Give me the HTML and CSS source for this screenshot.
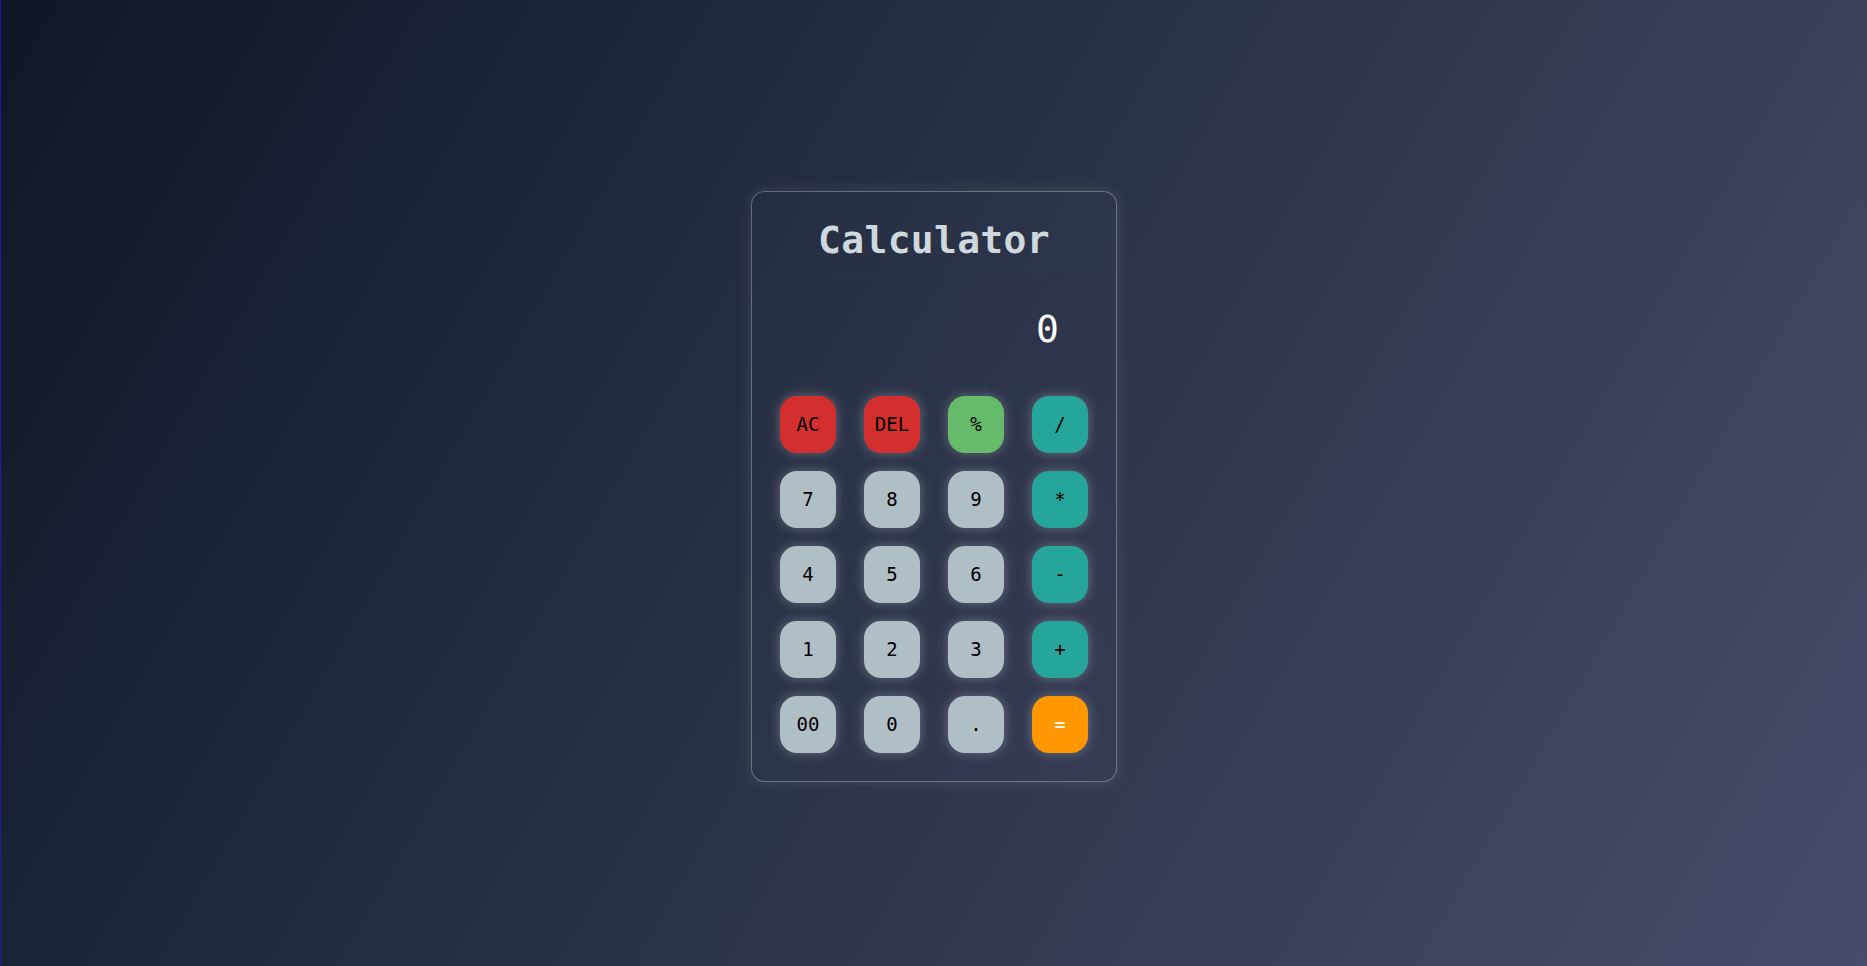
FILE: index.html
```html
<!DOCTYPE html>
<html>
<head>
<meta charset="utf-8">
<title>Calculator</title>
<link rel="stylesheet" href="styles.css">
</head>
<body>
<main class="page">
  <div class="calc">
    <h1 class="title">Calculator</h1>
    <div class="display"><span class="value">0</span></div>
    <div class="keys">
      <button class="key red">AC</button>
      <button class="key red">DEL</button>
      <button class="key green">%</button>
      <button class="key teal">/</button>
      <button class="key">7</button>
      <button class="key">8</button>
      <button class="key">9</button>
      <button class="key teal">*</button>
      <button class="key">4</button>
      <button class="key">5</button>
      <button class="key">6</button>
      <button class="key teal">-</button>
      <button class="key">1</button>
      <button class="key">2</button>
      <button class="key">3</button>
      <button class="key teal">+</button>
      <button class="key">00</button>
      <button class="key">0</button>
      <button class="key">.</button>
      <button class="key orange">=</button>
    </div>
  </div>
</main>
</body>
</html>
```

FILE: styles.css
```css
html, body {
  margin: 0;
  padding: 0;
  height: 100%;
}
body {
  background: linear-gradient(120deg, #0e1627 0%, #2a3247 48%, #484b6a 100%);
  font-family: "DejaVu Sans Mono", "Liberation Mono", monospace;
  border-left: 1px solid #24199a;
  box-sizing: border-box;
}
.page {
  height: 100%;
  display: flex;
  align-items: center;
  justify-content: center;
  padding-top: 6px;
  box-sizing: border-box;
}
.calc {
  width: 308px;
  padding: 28px;
  border: 1px solid rgba(255, 255, 255, 0.3);
  border-radius: 14px;
  background: rgba(255, 255, 255, 0.012);
  box-shadow: 0 0 14px rgba(255, 255, 255, 0.12);
}
.title {
  margin: 0;
  font-size: 38px;
  line-height: 38px;
  font-weight: bold;
  text-align: center;
  color: #cfd8dc;
  letter-spacing: 0.3px;
  padding-top: 1px;
}
.display {
  margin: 18px -2px 16px;
  height: 103px;
  box-sizing: border-box;
  border: 1px solid rgba(255, 255, 255, 0.015);
  background: rgba(30, 50, 110, 0.02);
  box-shadow: inset 0 0 5px rgba(0, 0, 0, 0.04);
  display: flex;
  align-items: flex-start;
  justify-content: flex-end;
  padding: 29px 30px 0 0;
}
.value {
  color: #ffffff;
  font-size: 38px;
  line-height: 44px;
}
.keys {
  display: grid;
  grid-template-columns: repeat(4, 56px);
  grid-auto-rows: 57px;
  column-gap: 28px;
  row-gap: 18px;
}
.key {
  border: none;
  border-radius: 17px;
  background: #b0bec5;
  color: #000;
  font-family: "DejaVu Sans Mono", "Liberation Mono", monospace;
  font-size: 19px;
  padding: 0;
  box-shadow: 0 0 12px rgba(255, 255, 255, 0.28);
}
.red { background: #d32f2f; }
.green { background: #66bb6a; }
.teal { background: #26a69a; }
.orange { background: #ff9800; color: #fff; }
```
